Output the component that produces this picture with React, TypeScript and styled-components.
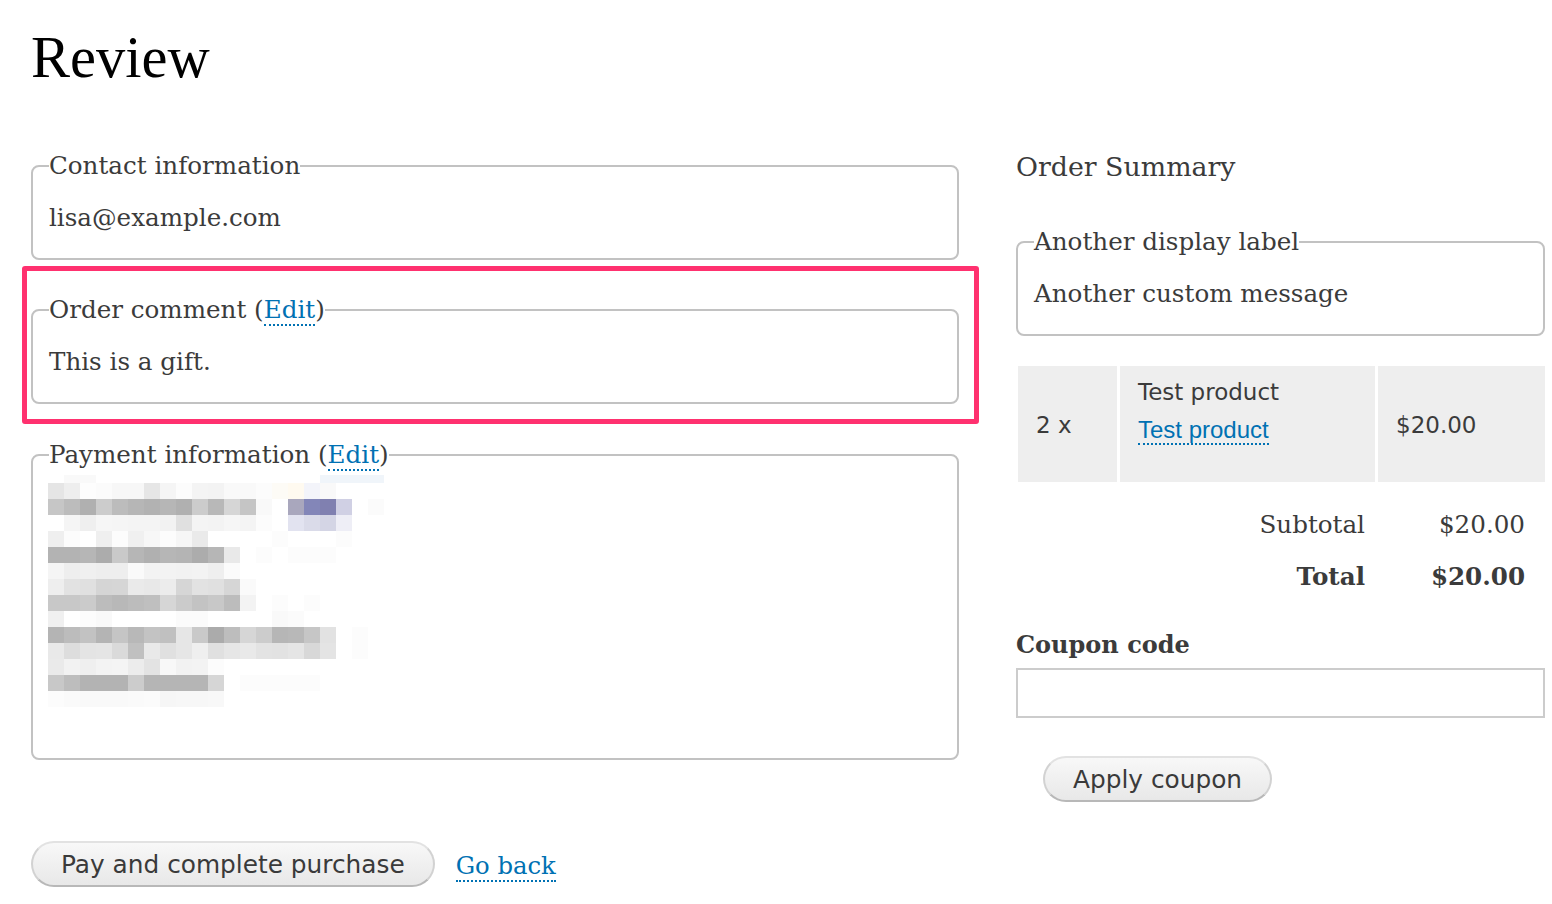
import React from "react";
import styled, { createGlobalStyle } from "styled-components";

const GlobalStyle = createGlobalStyle`
  html, body { margin: 0; padding: 0; background: #ffffff; }
  body {
    font-family: "DejaVu Serif", "Liberation Serif", serif;
    color: #3b3b3b;
    font-size: 24.6px;
  }
  * { box-sizing: border-box; }
`;

const Page = styled.div`
  padding: 26px 0 0 31px;
  width: 1552px;
`;

const Title = styled.h1`
  margin: 0;
  font-family: "Liberation Serif", "Times New Roman", serif;
  font-weight: 400;
  font-size: 58.5px;
  line-height: 64px;
  color: #000;
`;

const Columns = styled.div`
  display: grid;
  grid-template-columns: 928px 529px;
  column-gap: 57px;
  margin-top: 61px;
  align-items: start;
`;

const Column = styled.div`
  display: flex;
  flex-direction: column;
  align-items: stretch;
`;

const Fieldset = styled.fieldset`
  margin: 0;
  min-width: 0;
  border: 2px solid #c2c2c2;
  border-radius: 8px;
  padding: 0 16px 26px;
`;

const Legend = styled.legend`
  padding: 0;
  font-size: 24.6px;
  line-height: 29px;
  color: #3b3b3b;
`;

const FieldBody = styled.div<{ $gap?: number }>`
  margin-top: ${(p) => p.$gap ?? 23}px;
  font-size: 24.6px;
  line-height: 29px;
`;

const Highlight = styled.div`
  margin: 6px -20px 0 -9px;
  border: 5px solid #ff316f;
  border-radius: 3px;
  padding: 24px 15px 15px 4px;
`;

const Spaced = styled.div<{ $top: number }>`
  margin-top: ${(p) => p.$top}px;
`;

const Link = styled.a`
  color: #0071b3;
  text-decoration: none;
  border-bottom: 2px dotted #0071b3;
  cursor: pointer;
`;

const SansLink = styled(Link)`
  font-family: "Liberation Sans", Arial, sans-serif;
  font-size: 24px;
`;

const Actions = styled.div`
  display: flex;
  align-items: center;
  gap: 21px;
  margin-top: 81px;
`;

const Button = styled.button<{ $indent?: number }>`
  height: 46px;
  padding: 0 28px;
  margin-left: ${(p) => p.$indent ?? 0}px;
  font-family: "DejaVu Sans", "Lucida Grande", sans-serif;
  font-size: 24.8px;
  color: #3a3a3a;
  background: linear-gradient(to bottom, #f8f8f8, #e8e8e8);
  border: 2px solid #e2e2e2;
  border-left-color: #d2d2d2;
  border-right-color: #d2d2d2;
  border-bottom-color: #b8b8b8;
  border-radius: 23px;
  cursor: pointer;
  white-space: nowrap;
`;

const GoBack = styled(Link)`
  font-size: 24.3px;
  line-height: 29px;
  margin-top: 5px;
`;

const SummaryTitle = styled.h2`
  margin: 0 0 45px;
  font-weight: 400;
  font-size: 26.8px;
  line-height: 31px;
`;

const ItemRow = styled.div`
  display: grid;
  grid-template-columns: 99px 255px 167px;
  column-gap: 3px;
  margin: 30px 0 0 2px;
  height: 116px;
  font-family: "DejaVu Sans", "Lucida Grande", sans-serif;
  font-size: 23px;
`;

const Cell = styled.div<{ $top?: boolean }>`
  background: #eeeeee;
  padding: ${(p) => (p.$top ? "13px 18px 0" : "2px 18px 0")};
  display: flex;
  flex-direction: column;
  justify-content: ${(p) => (p.$top ? "flex-start" : "center")};
  line-height: 27px;
`;

const LinkLine = styled.div`
  margin-top: 10px;
  line-height: 27px;
`;

const Totals = styled.div`
  display: grid;
  grid-template-columns: auto 160px;
  justify-content: end;
  margin: 17px 20px 0 0;
  line-height: 52px;
  font-size: 24.6px;
`;

const TotalCell = styled.div<{ $bold?: boolean }>`
  text-align: right;
  font-weight: ${(p) => (p.$bold ? 700 : 400)};
`;

const CouponLabel = styled.label`
  display: block;
  margin-top: 28px;
  font-weight: 700;
  font-size: 24px;
  line-height: 28px;
`;

const CouponInput = styled.input`
  display: block;
  width: 529px;
  height: 50px;
  margin: 9px 0 0;
  border: 2px solid #cccccc;
  border-radius: 0;
  font-size: 22px;
  padding: 0 10px;
  outline: none;
`;

const CouponActions = styled.div`
  margin-top: 38px;
  display: flex;
`;

const BlurSvg = styled.svg`
  display: block;
  margin-left: -1px;
`;

const blurRows: { y: number; cells: string[] }[] = [
  { y: 6, cells: ["ff", "f9", "f9", "ff", "ff", "ff", "ff", "ff", "ff", "ff", "ff", "ff", "ff", "ff", "ff", "ff", "ff", "f0f5fa", "f0f5fa", "f0f5fa", "f0f5fa"] },
  { y: 14, cells: ["e5", "ee", "fd", "fb", "f7", "f7", "e6", "f5", "fc", "f4", "f3", "f9", "f9", "fc", "fdfbf6", "fffaf0", "f3f4fa", "f9"] },
  { y: 30, cells: ["c6", "bc", "b0", "cc", "bc", "b6", "b2", "b6", "b0", "cc", "b8", "d6", "c5", "f9", "ff", "a9a7bd", "8386b8", "8080b0", "d0d0e4", "ff", "fb"] },
  { y: 46, cells: ["ff", "f5", "ef", "f6", "f5", "f4", "f4", "f2", "e0", "f4", "f3", "f6", "f4", "fc", "ff", "e2e3f0", "dadbe9", "d4d5e5", "eeeef6"] },
  { y: 62, cells: ["ef", "fc", "ff", "ef", "fc", "f0", "f7", "fc", "f6", "ea", "ff", "ff", "ff", "ff", "fc", "ff", "ff", "ff", "fc"] },
  { y: 78, cells: ["b3", "b3", "b6", "ac", "c9", "b6", "b0", "b6", "b4", "ac", "b6", "e9", "ff", "fc", "ff", "fc", "fc", "fc"] },
  { y: 94, cells: ["f5", "ee", "f0", "ee", "ee", "fa", "f3", "f3", "f2", "f3", "ef", "fb"] },
  { y: 110, cells: ["ee", "e2", "e0", "d5", "d6", "ea", "e8", "ec", "d6", "e2", "e0", "d6", "fa"] },
  { y: 126, cells: ["c8", "c8", "cb", "bc", "b8", "bc", "bf", "d6", "cb", "c3", "c8", "bc", "f3", "ff", "fc", "ff", "fc"] },
  { y: 142, cells: ["f0", "ff", "fc", "f9", "ff", "ff", "ff", "ff", "fb", "fb", "ff", "ff", "ff", "ff", "f9", "fb"] },
  { y: 158, cells: ["b4", "bc", "c2", "b4", "c5", "b8", "c3", "c0", "e6", "c9", "ab", "bd", "d6", "cc", "b6", "b8", "c6", "e2", "ff", "fc"] },
  { y: 174, cells: ["e9", "dd", "e4", "e5", "da", "c0", "e9", "e0", "e6", "ef", "e0", "e6", "e9", "e3", "e2", "e5", "d8", "e4", "ff", "fc"] },
  { y: 190, cells: ["ea", "f2", "ef", "f3", "f4", "ec", "e3", "f8", "f2", "f3", "fc"] },
  { y: 206, cells: ["c8", "bd", "b3", "b3", "b3", "cc", "b5", "b5", "b5", "b5", "d6", "ff", "fc", "fc", "fc", "fc", "fc"] },
  { y: 222, cells: ["fc", "fa", "f9", "f9", "f9", "fa", "fb", "f6", "f7", "f7", "f8"] },
];

const toColor = (c: string) => (c.length === 2 ? `#${c}${c}${c}` : `#${c}`);

const PixelBlur = () => (
  <BlurSvg width={340} height={263} viewBox="0 0 340 263" shapeRendering="crispEdges">
    {blurRows.map((row) =>
      row.cells.map((c, i) =>
        c === "ff" ? null : (
          <rect
            key={`${row.y}-${i}`}
            x={i * 16}
            y={row.y}
            width={16}
            height={row.y === 6 ? 8 : 16}
            fill={toColor(c)}
          />
        )
      )
    )}
  </BlurSvg>
);

export default function App() {
  return (
    <>
      <GlobalStyle />
      <Page>
        <Title>Review</Title>
        <Columns>
          <Column>
            <Fieldset>
              <Legend>Contact information</Legend>
              <FieldBody>lisa@example.com</FieldBody>
            </Fieldset>

            <Highlight>
              <Fieldset>
                <Legend>
                  Order comment (<Link>Edit</Link>)
                </Legend>
                <FieldBody>This is a gift.</FieldBody>
              </Fieldset>
            </Highlight>

            <Spaced $top={16}>
              <Fieldset>
                <Legend>
                  Payment information (<Link>Edit</Link>)
                </Legend>
                <FieldBody $gap={0}>
                  <PixelBlur />
                </FieldBody>
              </Fieldset>
            </Spaced>

            <Actions>
              <Button type="button">Pay and complete purchase</Button>
              <GoBack>Go back</GoBack>
            </Actions>
          </Column>

          <Column>
            <SummaryTitle>Order Summary</SummaryTitle>
            <Fieldset>
              <Legend>Another display label</Legend>
              <FieldBody>Another custom message</FieldBody>
            </Fieldset>

            <ItemRow>
              <Cell>2 x</Cell>
              <Cell $top>
                <div>Test product</div>
                <LinkLine>
                  <SansLink>Test product</SansLink>
                </LinkLine>
              </Cell>
              <Cell>$20.00</Cell>
            </ItemRow>

            <Totals>
              <TotalCell>Subtotal</TotalCell>
              <TotalCell>$20.00</TotalCell>
              <TotalCell $bold>Total</TotalCell>
              <TotalCell $bold>$20.00</TotalCell>
            </Totals>

            <CouponLabel htmlFor="coupon">Coupon code</CouponLabel>
            <CouponInput id="coupon" type="text" />
            <CouponActions>
              <Button type="button" $indent={27}>
                Apply coupon
              </Button>
            </CouponActions>
          </Column>
        </Columns>
      </Page>
    </>
  );
}
